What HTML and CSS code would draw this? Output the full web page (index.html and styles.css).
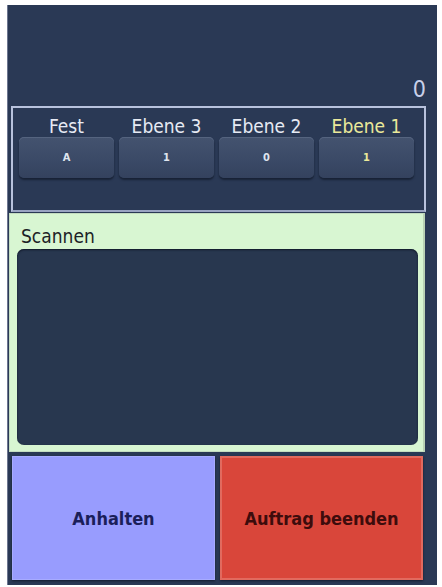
FILE: index.html
```html
<!DOCTYPE html>
<html lang="de">
<head>
  <meta charset="UTF-8" />
  <meta name="viewport" content="width=device-width, initial-scale=1.0"/>
  <title>Scannen</title>
  <link rel="stylesheet" href="styles.css">
</head>
<body>

  <div class="panel">
    <div class="counter">0</div>

    <div class="levels">
      <div class="level">
        <span class="level-name">Fest</span>
        <button class="level-btn">A</button>
      </div>
      <div class="level">
        <span class="level-name">Ebene 3</span>
        <button class="level-btn">1</button>
      </div>
      <div class="level">
        <span class="level-name">Ebene 2</span>
        <button class="level-btn">0</button>
      </div>
      <div class="level active">
        <span class="level-name">Ebene 1</span>
        <button class="level-btn">1</button>
      </div>
    </div>

    <div class="scan">
      <div class="scan-title">Scannen</div>
      <div class="scan-list"></div>
    </div>

    <div class="actions">
      <button class="action pause">Anhalten</button>
      <button class="action finish">Auftrag beenden</button>
    </div>
  </div>

</body>
</html>
```

FILE: styles.css
```css
body {
  margin: 0;
  background: #fff;
  font-family: "DejaVu Sans Condensed", "DejaVu Sans", sans-serif;
}
.panel {
  width: 430px;
  height: 580px;
  margin: 5px 0 0 7px;
  background: #2a3955;
  border-left: 1px solid #6d7690;
  box-sizing: border-box;
  display: flex;
  flex-direction: column;
}
.counter {
  height: 101px;
  box-sizing: border-box;
  display: flex;
  justify-content: flex-end;
  align-items: flex-end;
  padding: 0 11px 5px 0;
  color: #c9d1ea;
  font-size: 23px;
  line-height: 1;
}
.levels {
  width: 415px;
  height: 106px;
  margin-left: 3px;
  box-sizing: border-box;
  border: 2px solid #b8c2dd;
  border-bottom-color: #9aa4c2;
  padding: 7px 0 0 6px;
  display: grid;
  grid-template-columns: repeat(4, 95px);
  column-gap: 5px;
  align-content: start;
}
.level {
  display: flex;
  flex-direction: column;
  align-items: center;
}
.level-name {
  color: #e6eaf3;
  font-size: 19px;
  line-height: 22px;
}
.level-btn {
  width: 95px;
  height: 41px;
  border: none;
  border-radius: 5px;
  background: linear-gradient(#44536f, #3a4966 60%, #34425e);
  box-shadow: 0 2px 2px rgba(12, 18, 32, 0.6), inset 0 1px 0 #55647f;
  color: #dfe4ee;
  font-family: inherit;
  font-size: 11px;
  font-weight: bold;
}
.level.active .level-name,
.level.active .level-btn {
  color: #ebe99a;
}
.scan {
  width: 416px;
  height: 239px;
  margin: 1px 0 0 1px;
  box-sizing: border-box;
  background: #d8f6d2;
  border: 1px solid #c4dcc0;
  border-right: 2px solid #b9d2b5;
  padding: 11px 5px 6px 7px;
  display: flex;
  flex-direction: column;
}
.scan-title {
  color: #1c2226;
  font-size: 19px;
  line-height: 22px;
  padding-left: 4px;
  margin-bottom: 2px;
}
.scan-list {
  flex: 1;
  background: #28374f;
  border-radius: 7px;
  box-shadow: inset 0 1px 2px #101828;
}
.actions {
  display: flex;
  gap: 5px;
  margin: 4px 0 0 4px;
  height: 124px;
}
.action {
  width: 203px;
  height: 124px;
  border: none;
  font-family: inherit;
  font-size: 18px;
  font-weight: bold;
  box-shadow: 0 1px 2px rgba(10, 15, 30, 0.7);
}
.pause {
  background: #989cfe;
  border: 1px solid #a7abff;
  color: #1b1f5a;
}
.finish {
  background: #d9463a;
  border: 2px solid #e26a5e;
  color: #3d0c0c;
}
```
